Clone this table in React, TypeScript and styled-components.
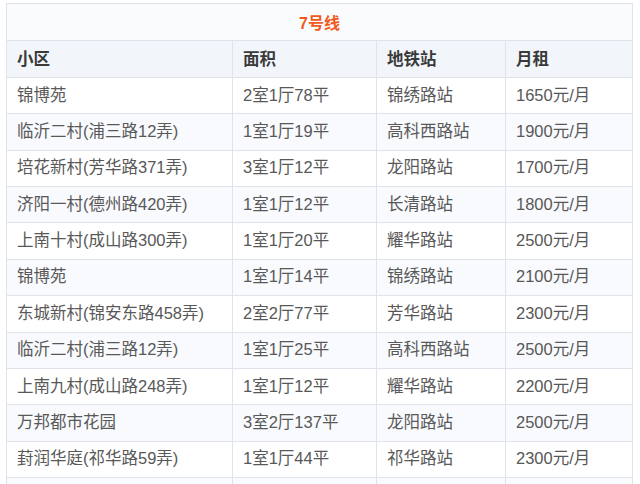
import styled, { createGlobalStyle } from 'styled-components';

const GlobalStyle = createGlobalStyle`
  html, body {
    margin: 0;
    padding: 0;
    background: #ffffff;
    overflow: hidden;
  }
  body {
    font-family: "Liberation Sans", "Noto Sans CJK SC", sans-serif;
  }
`;

interface Row {
  name: string;
  area: string;
  station: string;
  rent: string;
}

const columns = [
  { label: '小区', width: 226 },
  { label: '面积', width: 144 },
  { label: '地铁站', width: 129 },
  { label: '月租', width: 127 },
];

const rows: Row[] = [
  { name: '锦博苑', area: '2室1厅78平', station: '锦绣路站', rent: '1650元/月' },
  { name: '临沂二村(浦三路12弄)', area: '1室1厅19平', station: '高科西路站', rent: '1900元/月' },
  { name: '培花新村(芳华路371弄)', area: '3室1厅12平', station: '龙阳路站', rent: '1700元/月' },
  { name: '济阳一村(德州路420弄)', area: '1室1厅12平', station: '长清路站', rent: '1800元/月' },
  { name: '上南十村(成山路300弄)', area: '1室1厅20平', station: '耀华路站', rent: '2500元/月' },
  { name: '锦博苑', area: '1室1厅14平', station: '锦绣路站', rent: '2100元/月' },
  { name: '东城新村(锦安东路458弄)', area: '2室2厅77平', station: '芳华路站', rent: '2300元/月' },
  { name: '临沂二村(浦三路12弄)', area: '1室1厅25平', station: '高科西路站', rent: '2500元/月' },
  { name: '上南九村(成山路248弄)', area: '1室1厅12平', station: '耀华路站', rent: '2200元/月' },
  { name: '万邦都市花园', area: '3室2厅137平', station: '龙阳路站', rent: '2500元/月' },
  { name: '葑润华庭(祁华路59弄)', area: '1室1厅44平', station: '祁华路站', rent: '2300元/月' },
  { name: '', area: '', station: '', rent: '' },
];

const Page = styled.div`
  padding: 3px 8px 0 6px;
`;

const Table = styled.table`
  width: 626px;
  border-collapse: collapse;
  table-layout: fixed;
  border: 1px solid #dfe4ea;
  font-size: 16.5px;
`;

const TitleCell = styled.th`
  height: 36px;
  padding: 0;
  text-align: center;
  font-size: 16px;
  font-weight: 700;
  color: #f25a1d;
  background: #fafbfc;
  border: 1px solid #dfe4ea;
`;

const HeadCell = styled.th`
  height: 35px;
  padding: 0 10px 1px;
  line-height: 22px;
  text-align: left;
  font-size: 16.5px;
  font-weight: 700;
  color: #3a3a3a;
  background: #f2f6fb;
  border: 1px solid #dfe4ea;
`;

const BodyRow = styled.tr<{ $odd: boolean }>`
  background: ${({ $odd }) => ($odd ? '#f8fafd' : '#ffffff')};
`;

const Cell = styled.td`
  height: 33.36px;
  padding: 0 10px 2px;
  line-height: 22px;
  color: #585858;
  white-space: nowrap;
  overflow: hidden;
  border: 1px solid #dfe4ea;
`;

export default function App() {
  return (
    <>
      <GlobalStyle />
      <Page>
        <Table>
          <colgroup>
            {columns.map((c) => (
              <col key={c.label} style={{ width: c.width }} />
            ))}
          </colgroup>
          <thead>
            <tr>
              <TitleCell colSpan={4}>7号线</TitleCell>
            </tr>
            <tr>
              {columns.map((c) => (
                <HeadCell key={c.label}>{c.label}</HeadCell>
              ))}
            </tr>
          </thead>
          <tbody>
            {rows.map((r, i) => (
              <BodyRow key={i} $odd={i % 2 === 1}>
                <Cell>{r.name}</Cell>
                <Cell>{r.area}</Cell>
                <Cell>{r.station}</Cell>
                <Cell>{r.rent}</Cell>
              </BodyRow>
            ))}
          </tbody>
        </Table>
      </Page>
    </>
  );
}
